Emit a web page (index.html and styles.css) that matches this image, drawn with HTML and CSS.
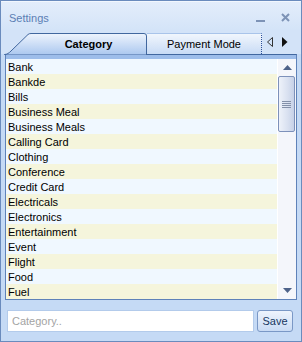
FILE: index.html
```html
<html>
    <head>
        <link rel="stylesheet" href="styles.css">
    </head>
    <body>
        <div class="window">
            <div class="titlebar">
                <span class="title">Settings</span>
                <div class="controls">
                    <svg width="10" height="10" viewBox="0 0 10 10"><rect x="0" y="7" width="9" height="2" fill="#7d93b6"/></svg>
                    <svg width="10" height="10" viewBox="0 0 10 10"><path d="M1,1 L8,8 M8,1 L1,8" stroke="#7d93b6" stroke-width="2"/></svg>
                </div>
            </div>
            <div class="tabstrip">
                <div class="tab tab-active">
                    <svg class="tab-shape" width="143" height="22" viewBox="0 0 143 22">
                        <defs>
                            <linearGradient id="act" x1="0" y1="0" x2="0" y2="1">
                                <stop offset="0" stop-color="#eef4fd"/>
                                <stop offset="1" stop-color="#aac7ef"/>
                            </linearGradient>
                        </defs>
                        <path d="M0.5,22 L0.5,21.5 C3,21.5 5,20 7,18 L24,1.5 Q25,0.5 27,0.5 L140,0.5 Q142.5,0.5 142.5,3 L142.5,22 Z" fill="url(#act)" stroke="#41679f"/>
                    </svg>
                    <span class="tab-label">Category</span>
                </div>
                <div class="tab tab-next">Payment Mode</div>
                <div class="tab-arrows">
                    <svg width="8" height="10" viewBox="0 0 8 10"><path d="M6.5,0.5 L6.5,9.5 L1.5,5 Z" fill="none" stroke="#333"/></svg>
                    <svg width="8" height="10" viewBox="0 0 8 10"><path d="M1,0 L1,10 L6.5,5 Z" fill="#111"/></svg>
                </div>
            </div>
            <div class="page">
                <div class="listbox">
                    <ul class="list">
                        <li>Bank</li>
                        <li>Bankde</li>
                        <li>Bills</li>
                        <li>Business Meal</li>
                        <li>Business Meals</li>
                        <li>Calling Card</li>
                        <li>Clothing</li>
                        <li>Conference</li>
                        <li>Credit Card</li>
                        <li>Electricals</li>
                        <li>Electronics</li>
                        <li>Entertainment</li>
                        <li>Event</li>
                        <li>Flight</li>
                        <li>Food</li>
                        <li>Fuel</li>
                    </ul>
                    <div class="scrollbar">
                        <div class="sb-button">
                            <svg width="9" height="5" viewBox="0 0 9 5"><path d="M0,5 L4.5,0 L9,5 Z" fill="#4d6289"/></svg>
                        </div>
                        <div class="sb-thumb">
                            <span></span><span></span><span></span><span></span>
                        </div>
                        <div class="sb-track"></div>
                        <div class="sb-button">
                            <svg width="9" height="5" viewBox="0 0 9 5"><path d="M0,0 L9,0 L4.5,5 Z" fill="#4d6289"/></svg>
                        </div>
                    </div>
                </div>
            </div>
            <div class="footer">
                <input class="entry" type="text" placeholder="Category..">
                <button class="save" type="button">Save</button>
            </div>
        </div>
    </body>
</html>
```

FILE: styles.css
```css
body {
    margin: 0;
    font-family: 'Liberation Sans', Arial, sans-serif;
    font-size: 11px;
}
.window {
    width: 302px;
    height: 342px;
    box-sizing: border-box;
    border: 1px solid #6a8bbd;
    background: #c5daf5;
    display: flex;
    flex-direction: column;
}
.titlebar {
    height: 29px;
    flex: none;
    display: flex;
    align-items: center;
    padding: 0 10px 0 8px;
    background: linear-gradient(#e3edfb, #d4e4f8);
    border-top: 1px solid #f2f7fe;
    box-sizing: border-box;
}
.title {
    color: #5b7eb4;
    font-size: 11px;
    flex: 1;
    margin-top: 3px;
}
.controls {
    display: flex;
    gap: 15px;
    margin-top: 3px;
}
.tabstrip {
    height: 24px;
    flex: none;
    display: flex;
    align-items: flex-end;
    padding-left: 3px;
    background: #d3e3f8;
}
.tab {
    height: 21px;
    box-sizing: border-box;
    display: flex;
    align-items: center;
    justify-content: center;
}
.tab-active {
    position: relative;
    width: 143px;
    padding-left: 26px;
    font-weight: bold;
    color: #000;
}
.tab-shape {
    position: absolute;
    left: 0;
    top: 0;
}
.tab-label {
    position: relative;
}
.tab-next {
    width: 115px;
    background: linear-gradient(#f1f6fd, #c8dbf5);
    border-top: 1px solid #a9c4ea;
    border-right: 1px dotted #2a4f9a;
    color: #000;
}
.tab-arrows {
    height: 24px;
    display: flex;
    align-items: center;
    gap: 7px;
    padding-left: 4px;
}
.page {
    height: 246px;
    flex: none;
    margin: 0 4px 0 4px;
    box-sizing: border-box;
    border: 1px solid #5e82b9;
    border-top-color: #41679f;
    padding-top: 4px;
    background: #9dbdea;
}
.listbox {
    display: flex;
    height: 240px;
    background: #f3f6fb;
}
.list {
    list-style: none;
    margin: 0;
    padding: 0;
    flex: 1;
}
.list li {
    height: 15px;
    line-height: 16px;
    padding-left: 2px;
    background: #f0f8ff;
    white-space: nowrap;
}
.list li:nth-child(even) {
    background: #f5f5dc;
}
.scrollbar {
    width: 18px;
    display: flex;
    flex-direction: column;
    background: #f4f6fb;
    border-left: 1px solid #fff;
}
.sb-button {
    height: 17px;
    display: flex;
    align-items: center;
    justify-content: center;
}
.sb-thumb {
    height: 56px;
    margin-right: 1px;
    box-sizing: border-box;
    border: 1px solid #7d91ba;
    border-radius: 2px;
    background: linear-gradient(to right, #eef2fa, #d8e0f0 60%, #c6d1e8);
    display: flex;
    flex-direction: column;
    align-items: center;
    justify-content: center;
    gap: 1px;
}
.sb-thumb span {
    width: 9px;
    height: 1px;
    background: #8390a9;
}
.sb-track {
    flex: 1;
}
.footer {
    flex: 1;
    display: flex;
    align-items: flex-start;
    padding: 10px 0 0 6px;
    gap: 3px;
}
.entry {
    width: 247px;
    height: 22px;
    box-sizing: border-box;
    border: 1px solid #b3cbeb;
    background: #fff;
    padding: 0 4px;
    font-family: 'Liberation Sans', Arial, sans-serif;
    font-size: 11px;
    outline: none;
}
.entry::placeholder {
    color: #a3a3a3;
}
.save {
    width: 36px;
    height: 22px;
    box-sizing: border-box;
    border: 1px solid #7a98c6;
    border-radius: 3px;
    background: linear-gradient(#eef4fd, #c9dbf4);
    padding: 0;
    font-family: 'Liberation Sans', Arial, sans-serif;
    font-size: 11px;
    color: #15365f;
}
```
